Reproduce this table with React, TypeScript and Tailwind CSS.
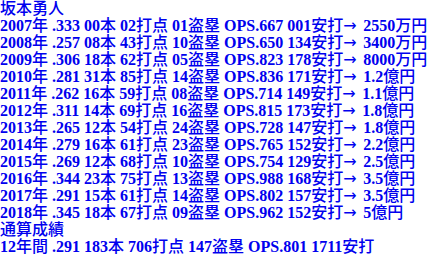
const rows = [
  "2007年 .333 00本 02打点 01盗塁 OPS.667 001安打→ 2550万円",
  "2008年 .257 08本 43打点 10盗塁 OPS.650 134安打→ 3400万円",
  "2009年 .306 18本 62打点 05盗塁 OPS.823 178安打→ 8000万円",
  "2010年 .281 31本 85打点 14盗塁 OPS.836 171安打→ 1.2億円",
  "2011年 .262 16本 59打点 08盗塁 OPS.714 149安打→ 1.1億円",
  "2012年 .311 14本 69打点 16盗塁 OPS.815 173安打→ 1.8億円",
  "2013年 .265 12本 54打点 24盗塁 OPS.728 147安打→ 1.8億円",
  "2014年 .279 16本 61打点 23盗塁 OPS.765 152安打→ 2.2億円",
  "2015年 .269 12本 68打点 10盗塁 OPS.754 129安打→ 2.5億円",
  "2016年 .344 23本 75打点 13盗塁 OPS.988 168安打→ 3.5億円",
  "2017年 .291 15本 61打点 14盗塁 OPS.802 157安打→ 3.5億円",
  "2018年 .345 18本 67打点 09盗塁 OPS.962 152安打→ 5億円",
];

const total = "12年間 .291 183本 706打点 147盗塁 OPS.801 1711安打";

// kanji runs are set in a lighter weight, latin stays bold
function Line({ text }: { text: string }) {
  const parts = text.split(/([\u3000-\u9fff]+|→)/).filter(Boolean);
  return (
    <div className="h-[17px]">
      {parts.map((p, i) =>
        p === "→" ? (
          <span
            key={i}
            className="inline-block w-[16px] h-[17px] align-top leading-[17px] overflow-hidden font-normal [font-family:'DejaVu_Sans',sans-serif]"
          >
            →
          </span>
        ) : /[\u3000-\u9fff]/.test(p) ? (
          <span key={i} className="font-medium">{p}</span>
        ) : (
          <span key={i}>{p}</span>
        )
      )}
    </div>
  );
}

export default function App() {
  return (
    <div className="bg-white w-[429px] h-[273px] overflow-hidden text-[#0000ee] font-bold text-[16px] leading-[17px] [font-family:'Liberation_Serif','Noto_Sans_CJK_JP',serif] whitespace-pre">
      <Line text="坂本勇人" />
      {rows.map((r) => (
        <Line key={r} text={r} />
      ))}
      <Line text="通算成績" />
      <Line text={total} />
    </div>
  );
}
